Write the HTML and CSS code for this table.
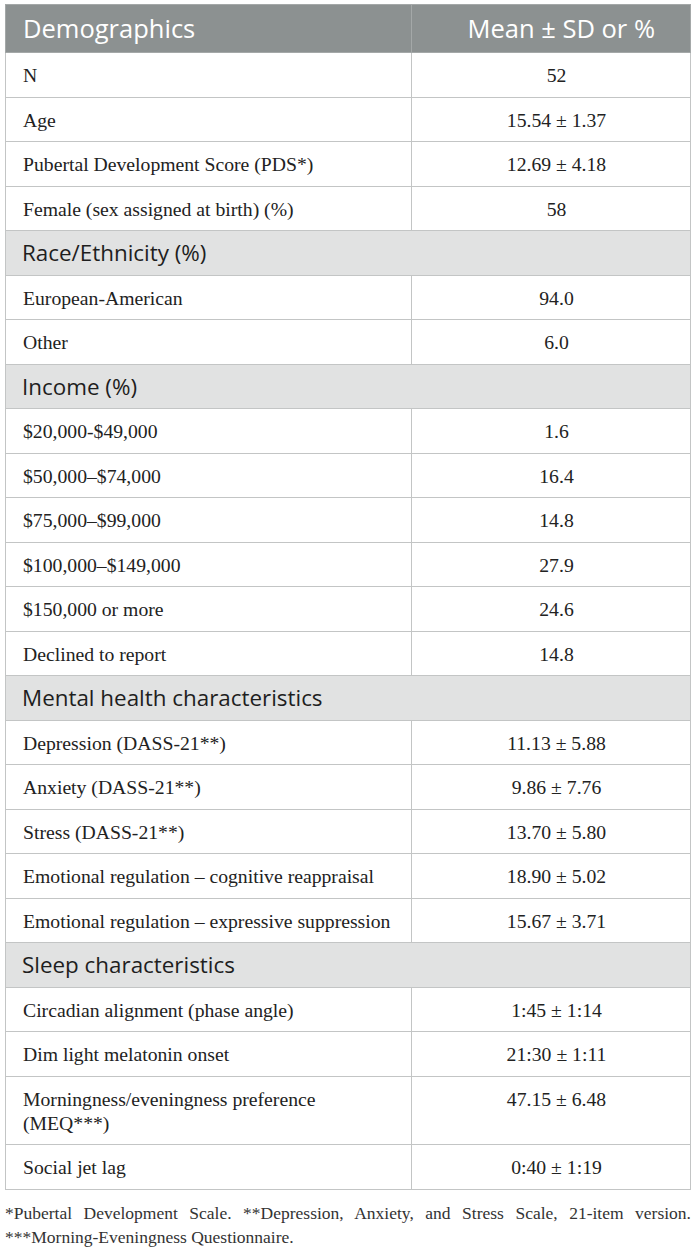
FILE: index.html
```html
<!DOCTYPE html>
<html>
<head>
<meta charset="utf-8">
<link rel="stylesheet" href="styles.css">
</head>
<body>
<div class="wrap">
<table class="data">
  <thead>
    <tr class="head">
      <th class="c1">Demographics</th>
      <th class="c2">Mean ± SD or %</th>
    </tr>
  </thead>
  <tbody>
    <tr><td>N</td><td class="val">52</td></tr>
    <tr><td>Age</td><td class="val">15.54 ± 1.37</td></tr>
    <tr><td>Pubertal Development Score (PDS*)</td><td class="val">12.69 ± 4.18</td></tr>
    <tr><td>Female (sex assigned at birth) (%)</td><td class="val">58</td></tr>
    <tr class="sec"><td colspan="2">Race/Ethnicity (%)</td></tr>
    <tr><td>European-American</td><td class="val">94.0</td></tr>
    <tr><td>Other</td><td class="val">6.0</td></tr>
    <tr class="sec"><td colspan="2">Income (%)</td></tr>
    <tr><td>$20,000-$49,000</td><td class="val">1.6</td></tr>
    <tr><td>$50,000–$74,000</td><td class="val">16.4</td></tr>
    <tr><td>$75,000–$99,000</td><td class="val">14.8</td></tr>
    <tr><td>$100,000–$149,000</td><td class="val">27.9</td></tr>
    <tr><td>$150,000 or more</td><td class="val">24.6</td></tr>
    <tr><td>Declined to report</td><td class="val">14.8</td></tr>
    <tr class="sec"><td colspan="2">Mental health characteristics</td></tr>
    <tr><td>Depression (DASS-21**)</td><td class="val">11.13 ± 5.88</td></tr>
    <tr><td>Anxiety (DASS-21**)</td><td class="val">9.86 ± 7.76</td></tr>
    <tr><td>Stress (DASS-21**)</td><td class="val">13.70 ± 5.80</td></tr>
    <tr><td>Emotional regulation – cognitive reappraisal</td><td class="val">18.90 ± 5.02</td></tr>
    <tr><td>Emotional regulation – expressive suppression</td><td class="val">15.67 ± 3.71</td></tr>
    <tr class="sec"><td colspan="2">Sleep characteristics</td></tr>
    <tr><td>Circadian alignment (phase angle)</td><td class="val">1:45 ± 1:14</td></tr>
    <tr><td>Dim light melatonin onset</td><td class="val">21:30 ± 1:11</td></tr>
    <tr><td>Morningness/eveningness preference (MEQ***)</td><td class="val">47.15 ± 6.48</td></tr>
    <tr><td>Social jet lag</td><td class="val">0:40 ± 1:19</td></tr>
  </tbody>
</table>
<p class="notes">*Pubertal Development Scale. **Depression, Anxiety, and Stress Scale, 21-item version. ***Morning-Eveningness Questionnaire.</p>
</div>
</body>
</html>
```

FILE: styles.css
```css
html, body {
  margin: 0;
  padding: 0;
  background: #ffffff;
}
.wrap {
  padding: 4px 5px 0 5px;
}
.data {
  width: 686px;
  border-collapse: collapse;
  font-family: "Liberation Serif", "Times New Roman", serif;
  font-size: 19.7px;
  color: #222;
  border: 1px solid #b9bcbc;
}
.data td {
  border: 1px solid #c3c5c5;
  padding: 10px 17px 9.5px 17px;
  line-height: 24px;
  vertical-align: top;
  text-align: left;
}
.data td:first-child {
  width: 371px;
}
.data td.val {
  text-align: center;
  padding-left: 28px;
  padding-right: 17px;
}
.head th {
  background: #8c9191;
  color: #fff;
  font-family: "Open Sans", Lato, sans-serif;
  font-weight: 400;
  font-size: 25.5px;
  line-height: 27px;
  padding: 10px 17px;
  border: 1px solid #a4a8a8;
}
.head th.c1 {
  text-align: left;
}
.head th.c2 {
  text-align: right;
  padding-right: 35px;
}
.sec td {
  background: #e1e2e2;
  font-family: "Open Sans", Lato, sans-serif;
  font-size: 22.4px;
  color: #1e1e1e;
  padding-left: 16px;
}
.notes {
  margin: 11px 0 0 0;
  font-family: "Liberation Serif", "Times New Roman", serif;
  font-size: 17.5px;
  line-height: 24px;
  color: #333;
  text-align: justify;
}
```
